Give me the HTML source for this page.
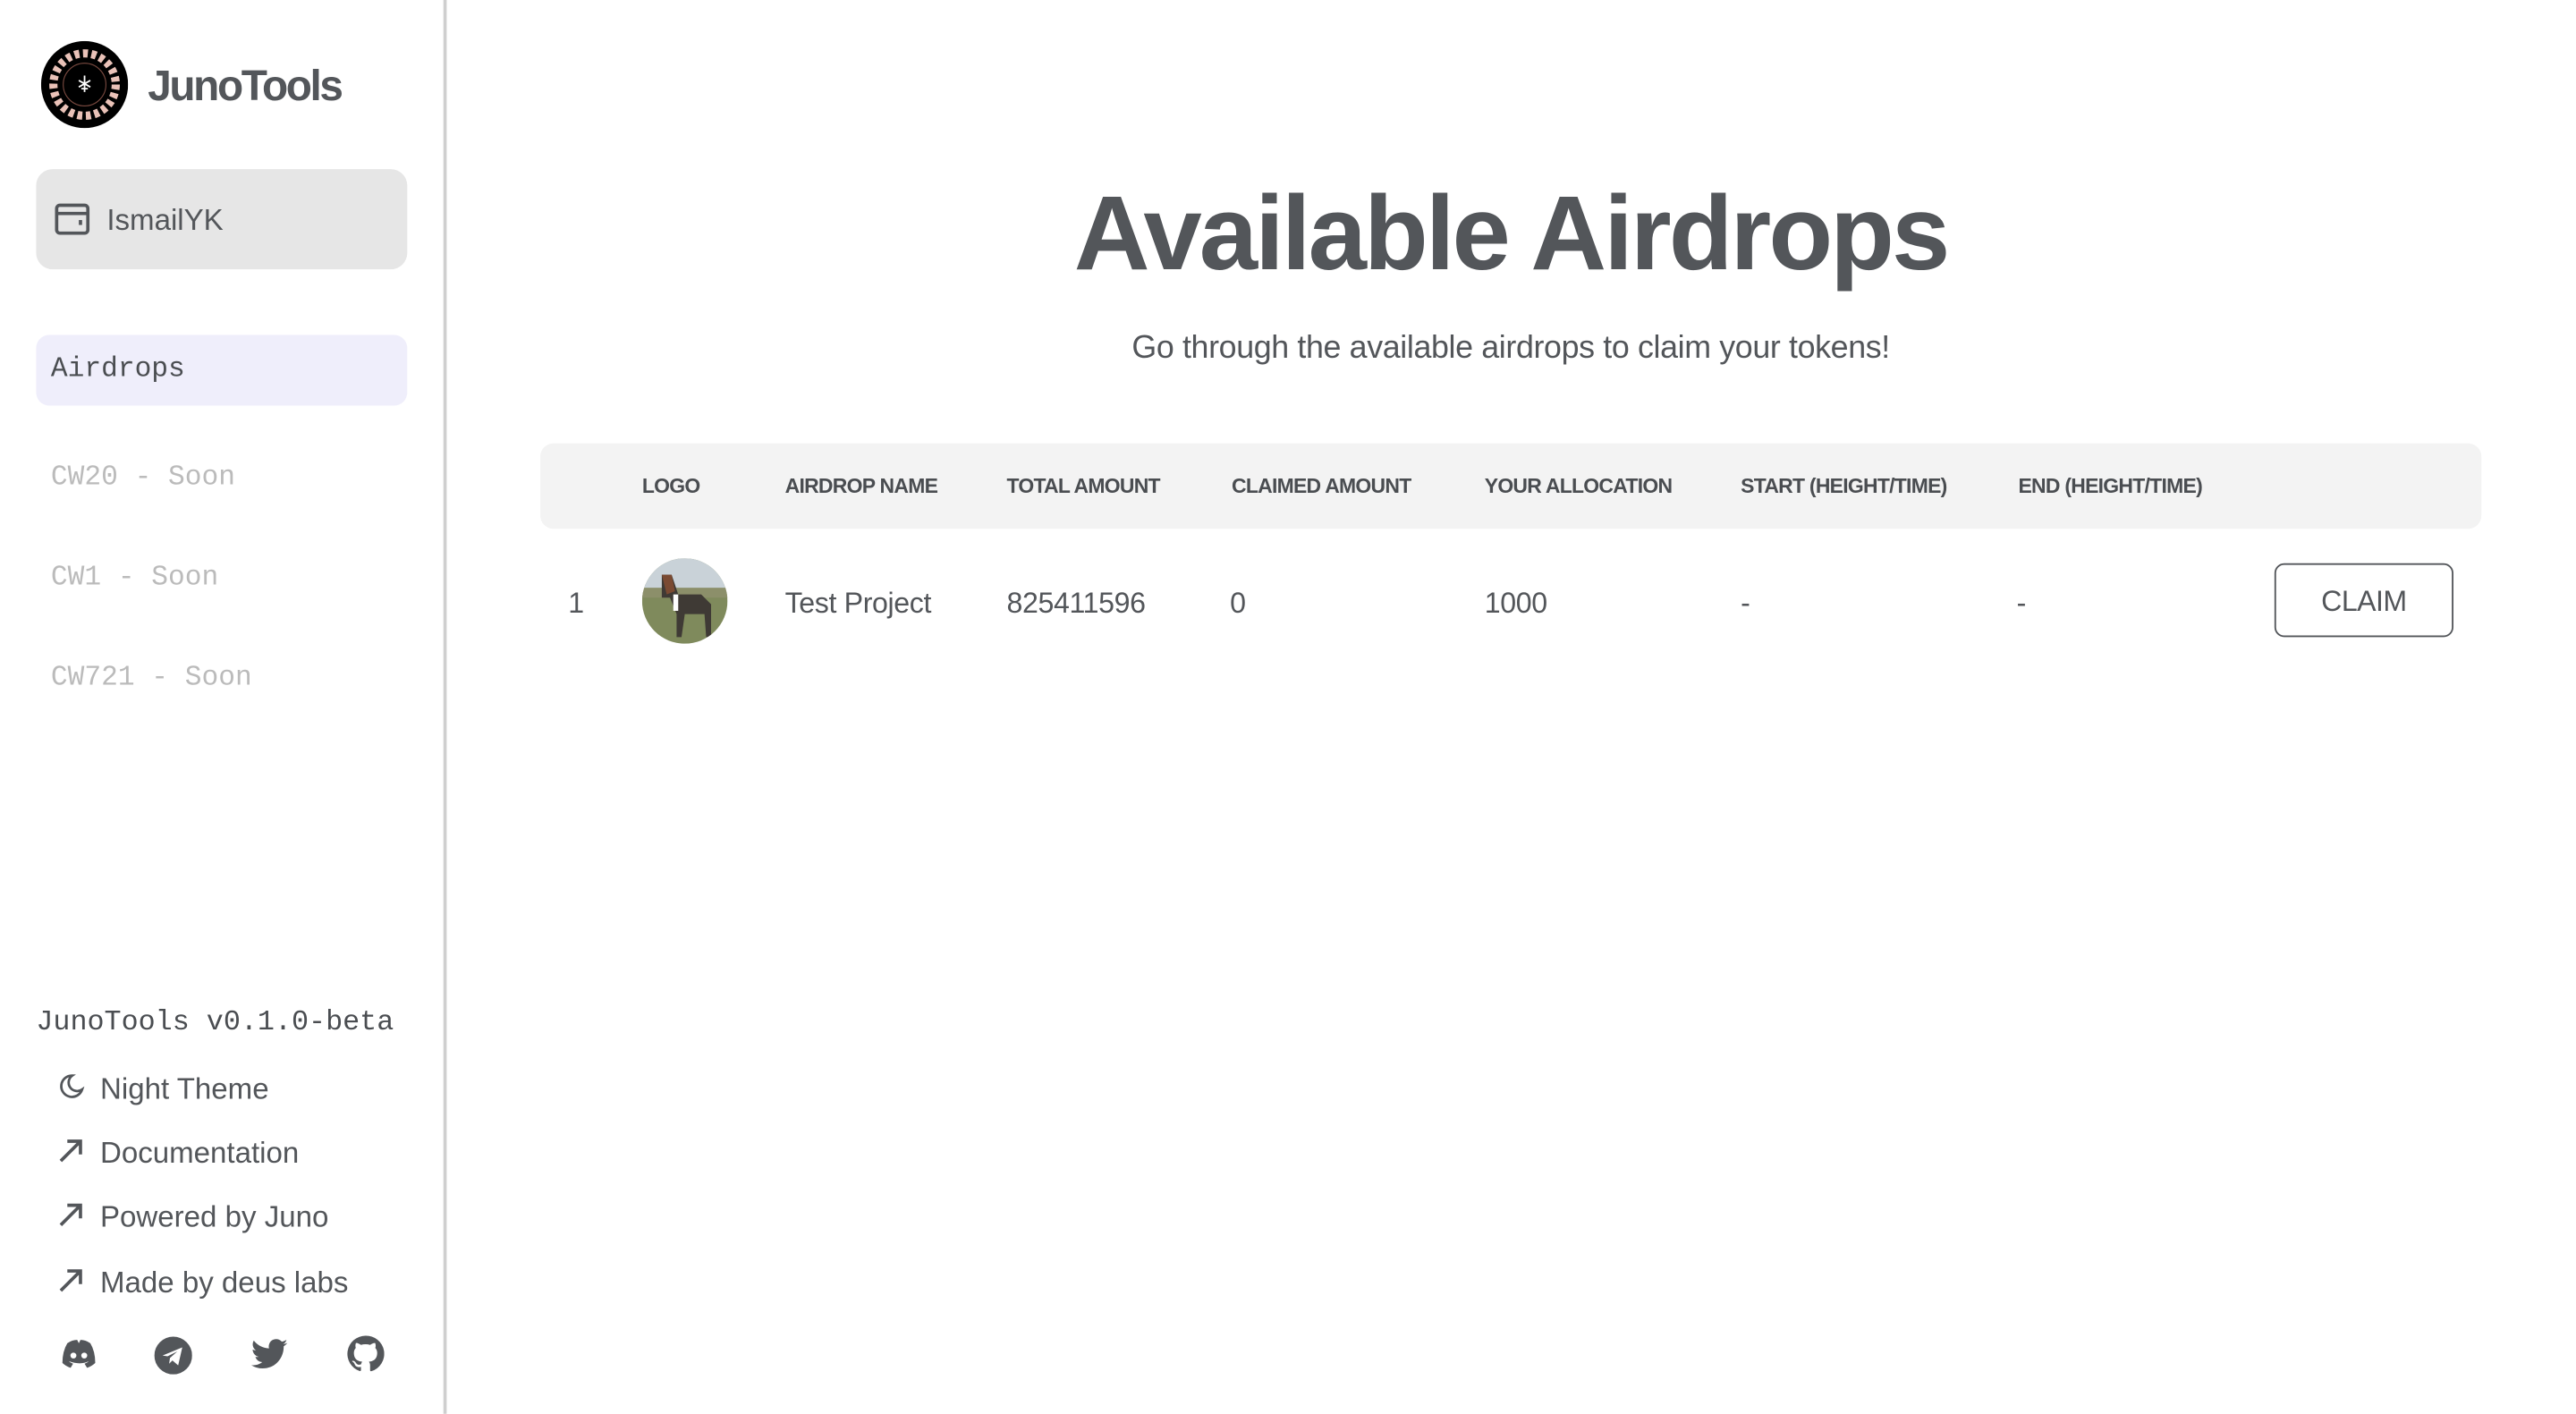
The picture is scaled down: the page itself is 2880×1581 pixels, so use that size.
<!DOCTYPE html>
<html><head><meta charset="utf-8"><style>
html,body{margin:0;padding:0;background:#fff;width:2880px;height:1580px;overflow:hidden}
#w{position:absolute;left:0;top:0;width:1570px;height:861px;transform:scale(1.836);transform-origin:0 0;font-family:"Liberation Sans",sans-serif;color:#53565a}
.a{position:absolute;white-space:nowrap}
.mono{font-family:"Liberation Mono",monospace}
.th{position:absolute;top:289px;font-size:12.5px;font-weight:bold;letter-spacing:-0.4px;color:#4a4d51}
.td{position:absolute;top:357px;font-size:17.5px;letter-spacing:-0.2px}
.ic{position:absolute}
</style></head><body><div id="w">
<div class="a" style="left:270px;top:0;width:2px;height:861px;background:#cfcfcf"></div>
<svg class="ic" style="left:25px;top:25px" width="53" height="53" viewBox="0 0 53 53">
<circle cx="26.5" cy="26.5" r="26.5" fill="#000"/>
<circle cx="26.5" cy="26.5" r="19" fill="none" stroke="#eac2b8" stroke-width="5" stroke-dasharray="3 2.2"/>
<circle cx="26.5" cy="26.5" r="13" fill="none" stroke="#7a4a40" stroke-width="0.6"/>
<path d="M26.5 21v10M23 24l7 4M30 24l-7 4M24.5 29h4" stroke="#fff" stroke-width="1"/>
</svg>
<div class="a" style="left:90px;top:37px;font-size:26px;font-weight:bold;letter-spacing:-1.3px;color:#53565a">JunoTools</div>
<div class="a" style="left:22px;top:103px;width:226px;height:61px;background:#e6e6e6;border-radius:10px"></div>
<svg class="ic" style="left:33px;top:123px" width="22" height="22" viewBox="0 0 22 22"><rect x="1.5" y="2" width="19" height="17" rx="2" fill="none" stroke="#53565a" stroke-width="2"/><path d="M2 7h18" stroke="#53565a" stroke-width="2"/><rect x="15" y="11" width="2" height="3" fill="#53565a"/></svg>
<div class="a" style="left:65px;top:124px;font-size:18px">IsmailYK</div>
<div class="a" style="left:22px;top:204px;width:226px;height:43px;background:#efeefb;border-radius:8px"></div>
<div class="a mono" style="left:31px;top:216px;font-size:17px;color:#4a4d51">Airdrops</div>
<div class="a mono" style="left:31px;top:282px;font-size:17px;color:#bbb">CW20 - Soon</div>
<div class="a mono" style="left:31px;top:343px;font-size:17px;color:#bbb">CW1 - Soon</div>
<div class="a mono" style="left:31px;top:404px;font-size:17px;color:#bbb">CW721 - Soon</div>
<div class="a mono" style="left:22px;top:614px;font-size:17.3px;color:#4a4d51">JunoTools v0.1.0-beta</div>
<svg class="ic" style="left:35px;top:653px" width="17" height="17" viewBox="0 0 17 17"><path d="M9 2a6.5 6.5 0 1 0 6 8.5A5 5 0 0 1 9 2z" fill="none" stroke="#53565a" stroke-width="1.5"/></svg>
<div class="a" style="left:61px;top:653px;font-size:18px">Night Theme</div>
<svg class="ic" style="left:35px;top:692px" width="17" height="17" viewBox="0 0 17 17"><path d="M2 15L14 3M6 3h8v8" fill="none" stroke="#53565a" stroke-width="2"/></svg>
<div class="a" style="left:61px;top:692px;font-size:18px">Documentation</div>
<svg class="ic" style="left:35px;top:731px" width="17" height="17" viewBox="0 0 17 17"><path d="M2 15L14 3M6 3h8v8" fill="none" stroke="#53565a" stroke-width="2"/></svg>
<div class="a" style="left:61px;top:731px;font-size:18px">Powered by Juno</div>
<svg class="ic" style="left:35px;top:771px" width="17" height="17" viewBox="0 0 17 17"><path d="M2 15L14 3M6 3h8v8" fill="none" stroke="#53565a" stroke-width="2"/></svg>
<div class="a" style="left:61px;top:771px;font-size:18px">Made by deus labs</div>
<svg class="ic" style="left:37px;top:815px" width="22" height="20" viewBox="0 0 22 20"><path d="M4 3q3-2 6-2l1 2 1-2q3 0 6 2 3 5 3 12-2 2-5 3l-1.5-2.5q2-.8 2.5-1.5-5 2.5-12 0 .5.7 2.5 1.5L6 18q-3-1-5-3 0-7 3-12z" fill="#53565a"/><circle cx="7.7" cy="10.5" r="1.8" fill="#fff"/><circle cx="14.3" cy="10.5" r="1.8" fill="#fff"/></svg>
<svg class="ic" style="left:94px;top:814px" width="23" height="23" viewBox="0 0 23 23"><circle cx="11.5" cy="11.5" r="11.5" fill="#53565a"/><path d="M5 11.5l12-5-2.5 11-3.5-3-2 2 .5-3.5 4.5-4-6 3z" fill="#fff"/></svg>
<svg class="ic" style="left:153px;top:815px" width="23" height="20" viewBox="0 0 24 20"><path d="M23 2.5a9 9 0 0 1-2.7.8A4.7 4.7 0 0 0 22.4.6a9 9 0 0 1-3 1.1A4.7 4.7 0 0 0 11.3 6 13.4 13.4 0 0 1 1.6 1a4.7 4.7 0 0 0 1.4 6.3 4.6 4.6 0 0 1-2.1-.6 4.7 4.7 0 0 0 3.8 4.6 4.7 4.7 0 0 1-2.1.1 4.7 4.7 0 0 0 4.4 3.3A9.5 9.5 0 0 1 0 16.6 13.3 13.3 0 0 0 7.2 18.7c8.7 0 13.4-7.2 13.4-13.4v-.6A9.5 9.5 0 0 0 23 2.5z" fill="#53565a"/></svg>
<svg class="ic" style="left:211px;top:813px" width="23" height="23" viewBox="0 0 24 24"><path d="M12 .5a11.5 11.5 0 0 0-3.6 22.4c.6.1.8-.3.8-.6v-2c-3.2.7-3.9-1.5-3.9-1.5-.5-1.3-1.3-1.7-1.3-1.7-1-.7.1-.7.1-.7 1.2.1 1.8 1.2 1.8 1.2 1 1.8 2.7 1.3 3.4 1 .1-.8.4-1.3.7-1.6-2.6-.3-5.3-1.3-5.3-5.7 0-1.3.5-2.3 1.2-3.1-.1-.3-.5-1.5.1-3.1 0 0 1-.3 3.2 1.2a11 11 0 0 1 5.8 0c2.2-1.5 3.2-1.2 3.2-1.2.6 1.6.2 2.8.1 3.1.7.8 1.2 1.8 1.2 3.1 0 4.4-2.7 5.4-5.3 5.7.4.4.8 1.1.8 2.2v3.2c0 .3.2.7.8.6A11.5 11.5 0 0 0 12 .5z" fill="#53565a"/></svg>

<div class="a" style="left:290px;width:1260px;top:105px;text-align:center;font-size:64px;font-weight:bold;letter-spacing:-1.6px;color:#53565a">Available Airdrops</div>
<div class="a" style="left:290px;width:1260px;top:201px;text-align:center;font-size:19.5px;letter-spacing:-0.2px">Go through the available airdrops to claim your tokens!</div>
<div class="a" style="left:329px;top:270px;width:1182px;height:52px;background:#f3f3f3;border-radius:8px"></div>
<div class="th" style="left:391px">LOGO</div>
<div class="th" style="left:478px">AIRDROP NAME</div>
<div class="th" style="left:613px">TOTAL AMOUNT</div>
<div class="th" style="left:750px">CLAIMED AMOUNT</div>
<div class="th" style="left:904px">YOUR ALLOCATION</div>
<div class="th" style="left:1060px">START (HEIGHT/TIME)</div>
<div class="th" style="left:1229px">END (HEIGHT/TIME)</div>
<div class="td" style="left:346px">1</div>
<svg class="ic" style="left:391px;top:340px" width="52" height="52" viewBox="0 0 52 52"><defs><clipPath id="c"><circle cx="26" cy="26" r="26"/></clipPath></defs><g clip-path="url(#c)"><rect width="52" height="52" fill="#7f8a5c"/><rect width="52" height="18" fill="#c9d2d8"/><rect y="18" width="52" height="6" fill="#8c8f6a"/><path d="M12 10l6 0 4 12 14 0 6 6 0 20-3 0-1-14-12 0-2 14-3 0 0-14-4-10-5 0z" fill="#3f3a35"/><path d="M12 10l6 0 2 10-5 2z" fill="#7a4a32"/><rect x="19" y="22" width="3" height="10" fill="#fff"/></g></svg>
<div class="td" style="left:478px">Test Project</div>
<div class="td" style="left:613px">825411596</div>
<div class="td" style="left:749px">0</div>
<div class="td" style="left:904px">1000</div>
<div class="td" style="left:1060px">-</div>
<div class="td" style="left:1228px">-</div>
<div class="a" style="left:1385px;top:343px;width:107px;height:43px;border:1px solid #53565a;border-radius:6px;text-align:center;line-height:45px;font-size:17.5px;letter-spacing:-0.3px">CLAIM</div>
</div></body></html>
